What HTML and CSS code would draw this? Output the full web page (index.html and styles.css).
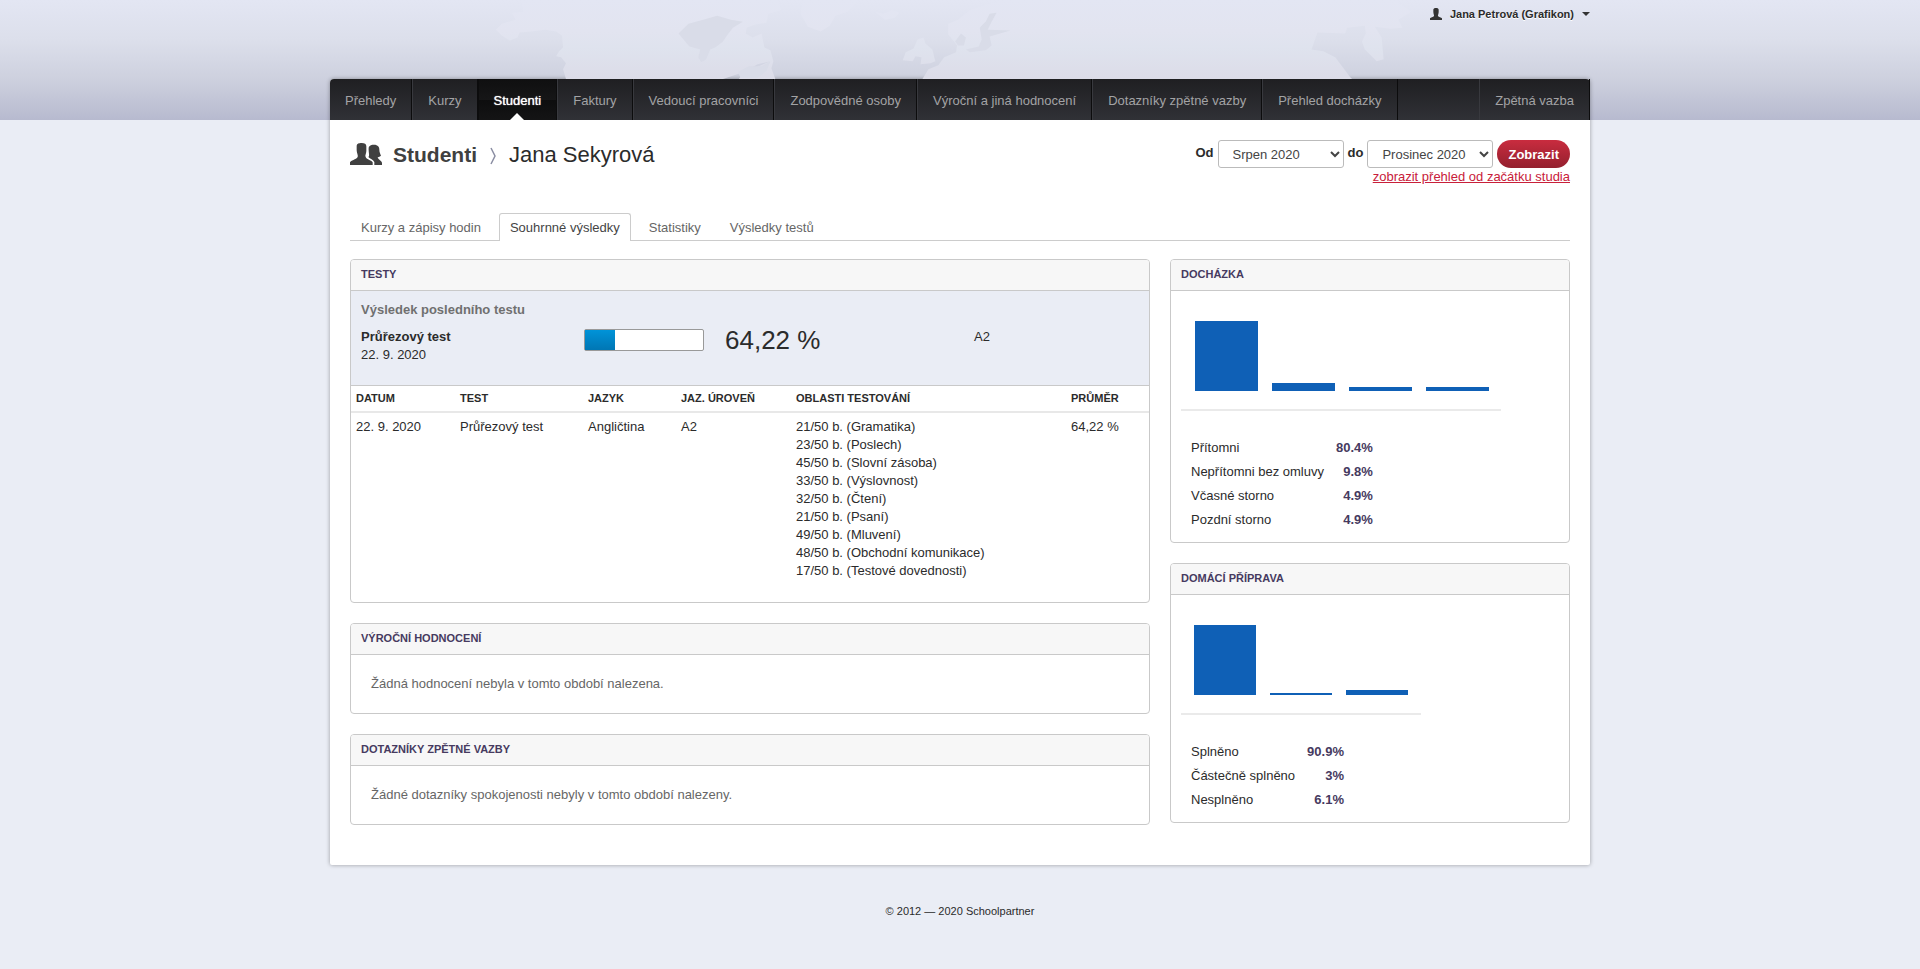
FILE: index.html
```html
<!DOCTYPE html>
<html lang="cs">
<head>
<meta charset="utf-8">
<title>Studenti – Jana Sekyrová</title>
<link rel="stylesheet" href="styles.css">
</head>
<body>
<header class="top">
  <div class="wrap top-inner">
    <svg class="map" viewBox="330 0 1260 80" preserveAspectRatio="xMidYMin meet" aria-hidden="true">
      <defs>
        <linearGradient id="land" x1="0" y1="0" x2="0" y2="80" gradientUnits="userSpaceOnUse">
          <stop offset="0" stop-color="#e3e6f3"/><stop offset="0.4" stop-color="#e2e4f0"/>
          <stop offset="0.6" stop-color="#dfe3ee"/><stop offset="1" stop-color="#dcdce8"/>
        </linearGradient>
      </defs>
      <g fill="url(#land)">
        <path d="M515 0H776L779 10L766 14L764 23L752 25L744 28L743 34L750 38L759 34L762 48L768 51L771 62L769 69L773 80H736L741 74L756 67L768 62L755 65L741 73L735 75L720 80H561L558 70L561 64L556 58L551 57L554 52L558 48L557 36L551 32L540 30L526 32L514 33L512 38L504 41L496 36L490 30L496 24L510 20L506 13L518 12Z"/>
        <path d="M800 0H858L846 12L834 16L828 26L819 32L806 27L799 15Z"/>
        <path d="M874 12L882 14L892 10L899 13L894 18L884 20Z"/>
        <path d="M1020 0H1400L1417 12L1404 20L1408 28L1396 29L1380 27L1387 38L1389 60L1382 62L1370 50L1367 42L1371 34L1370 26L1352 28L1350 34L1322 33L1316 50L1328 52L1340 58L1355 78L1357 80H922L928 70L938 66L944 58L956 53L957 46L954 42L948 35L948 24L958 20L970 10L1002 0Z"/>
        <path d="M917 40L923 38L925 44L932 50L935 62L930 64L920 65L921 58L915 57L912 62L902 61L905 53L913 49Z"/>
      </g>
      <g fill="#d9dce8">
        <path d="M675 34L685 24L700 20L714 16L728 20L740 22L730 28L724 36L720 42L712 48L707 50L703 60L698 63L695 58L697 50L686 47Z"/>
        <path d="M735 73L746 67L759 67L768 62L764 72L755 79H738Z"/>
        <path d="M980 28L986 22L990 14L997 13L992 22L988 30L1011 31L990 37L992 46L986 51L970 53L966 50L979 47L982 40Z"/>
        <path d="M955 42L961 34L966 38L964 46L958 46Z"/>
      </g>
    </svg>
    <button class="user" type="button">
      <svg class="user-icon" viewBox="0 0 36 36" aria-hidden="true"><path d="M0 36V31C2 28 10 27 12 24C13 21 10 18 10 12V5C10 2 13 0 18 0C23 0 26 2 26 5V12C26 18 23 21 24 24C26 27 34 28 36 31V36Z"/></svg>
      <span>Jana Petrová (Grafikon)</span>
      <span class="caret"></span>
    </button>
  </div>
</header>

<div class="wrap page">
  <nav class="nav">
    <a href="#">Přehledy</a>
    <a href="#">Kurzy</a>
    <a href="#" class="active" aria-current="page">Studenti</a>
    <a href="#">Faktury</a>
    <a href="#">Vedoucí pracovníci</a>
    <a href="#">Zodpovědné osoby</a>
    <a href="#">Výroční a jiná hodnocení</a>
    <a href="#">Dotazníky zpětné vazby</a>
    <a href="#">Přehled docházky</a>
    <a href="#" class="nav-end">Zpětná vazba</a>
  </nav>

  <main class="content">
    <div class="title-row">
      <h1 class="title">
        <svg class="title-icon" viewBox="0 0 96 66" aria-hidden="true">
          <path d="M0 66V58C2 52 18 50 23 42C25 38 20 30 20 22V10C20 2 26 0 35 0C44 0 49 2 49 10V24C49 32 44 38 47 42C50 50 66 52 68 58V66Z"/>
          <path d="M56 14C58 6 66 5 72 5C84 5 88 12 88 20C88 28 92 34 93 38C89 42 83 41 83 44C86 50 94 52 96 59V66H73V57C70 50 60 47 55 42C60 38 55 28 56 14Z"/>
        </svg>
        <strong>Studenti</strong>
        <svg class="chevron" viewBox="0 0 6 18" aria-hidden="true"><path d="M1 1L5 9L1 17"/></svg>
        <span>Jana Sekyrová</span>
      </h1>
      <form class="filter">
        <div class="filter-row">
          <label for="from">Od</label>
          <select id="from"><option>Srpen 2020</option></select>
          <label for="to">do</label>
          <select id="to"><option>Prosinec 2020</option></select>
          <button class="submit" type="button">Zobrazit</button>
        </div>
        <a class="all-link" href="#">zobrazit přehled od začátku studia</a>
      </form>
    </div>

    <div class="tabs">
      <a href="#">Kurzy a zápisy hodin</a>
      <a href="#" class="current">Souhrnné výsledky</a>
      <a href="#">Statistiky</a>
      <a href="#">Výsledky testů</a>
    </div>

    <div class="columns">
      <div class="column">
        <section class="panel">
          <h2>TESTY</h2>
          <div class="summary">
            <h3>Výsledek posledního testu</h3>
            <div class="summary-row">
              <div><strong>Průřezový test</strong><br>22. 9. 2020</div>
              <div class="meter"><div class="meter-fill"></div></div>
              <div class="score">64,22 %</div>
              <div>A2</div>
            </div>
          </div>
          <table class="results">
            <thead>
              <tr><th class="c-date">DATUM</th><th class="c-test">TEST</th><th class="c-lang">JAZYK</th><th class="c-level">JAZ. ÚROVEŇ</th><th class="c-areas">OBLASTI TESTOVÁNÍ</th><th>PRŮMĚR</th></tr>
            </thead>
            <tbody>
              <tr>
                <td>22. 9. 2020</td><td>Průřezový test</td><td>Angličtina</td><td>A2</td>
                <td>21/50 b. (Gramatika)<br>23/50 b. (Poslech)<br>45/50 b. (Slovní zásoba)<br>33/50 b. (Výslovnost)<br>32/50 b. (Čtení)<br>21/50 b. (Psaní)<br>49/50 b. (Mluvení)<br>48/50 b. (Obchodní komunikace)<br>17/50 b. (Testové dovednosti)</td>
                <td>64,22 %</td>
              </tr>
            </tbody>
          </table>
        </section>
        <section class="panel">
          <h2>VÝROČNÍ HODNOCENÍ</h2>
          <p class="empty">Žádná hodnocení nebyla v tomto období nalezena.</p>
        </section>
        <section class="panel">
          <h2>DOTAZNÍKY ZPĚTNÉ VAZBY</h2>
          <p class="empty">Žádné dotazníky spokojenosti nebyly v tomto období nalezeny.</p>
        </section>
      </div>

      <div class="column">
        <section class="panel">
          <h2>DOCHÁZKA</h2>
          <div class="chart chart-four">
            <div class="bar" style="height:70px"></div>
            <div class="bar" style="height:8px"></div>
            <div class="bar" style="height:4px"></div>
            <div class="bar" style="height:4px"></div>
          </div>
          <table class="legend">
            <tr><th>Přítomni</th><td>80.4%</td></tr>
            <tr><th>Nepřítomni bez omluvy</th><td>9.8%</td></tr>
            <tr><th>Včasné storno</th><td>4.9%</td></tr>
            <tr><th>Pozdní storno</th><td>4.9%</td></tr>
          </table>
        </section>
        <section class="panel">
          <h2>DOMÁCÍ PŘÍPRAVA</h2>
          <div class="chart chart-three">
            <div class="bar" style="height:70px"></div>
            <div class="bar" style="height:2px"></div>
            <div class="bar" style="height:5px"></div>
          </div>
          <table class="legend">
            <tr><th>Splněno</th><td>90.9%</td></tr>
            <tr><th>Částečně splněno</th><td>3%</td></tr>
            <tr><th>Nesplněno</th><td>6.1%</td></tr>
          </table>
        </section>
      </div>
    </div>
  </main>
</div>
<footer class="footer">© 2012 — 2020 Schoolpartner</footer>
</body>
</html>
```
FILE: styles.css
```css
* { box-sizing: border-box; }

body {
  margin: 0;
  background: #eaedf5 linear-gradient(#e3e6f3, #dcdfeb 40px, #cdd0de 80px, #b7bacf 120px) no-repeat 0 0 / 100% 120px;
  color: #2b2b2b;
  font: 13px/18px "Liberation Sans", Arial, sans-serif;
}

.wrap { max-width: 1260px; margin: 0 auto; }

/* top strip with the world map */
.top-inner {
  position: relative;
  display: flex;
  justify-content: flex-end;
  height: 79px;
}
.map { position: absolute; inset: 0; width: 100%; height: 100%; }
.user {
  position: relative;
  display: flex;
  align-items: center;
  align-self: flex-start;
  gap: 8px;
  padding: 5px 0;
  border: 0;
  background: none;
  color: #2b2b2b;
  font: bold 11px/18px "Liberation Sans", Arial, sans-serif;
  text-shadow: 0 1px 0 #fff;
}
.user-icon { width: 12px; height: 12px; fill: #333; }
.caret { border: 4px solid transparent; border-top-color: #333; border-bottom: 0; }

.page {
  background: #fff;
  border-radius: 4px 4px 2px 2px;
  box-shadow: 0 0 4px rgba(0, 0, 0, .35);
}

/* main navigation */
.nav {
  display: flex;
  height: 41px;
  border-radius: 4px 4px 0 0;
  background: linear-gradient(#1f1f22, #303136);
}
.nav a {
  padding: 0 15px;
  border-right: 1px solid #0c0c0d;
  border-left: 1px solid #38393e;
  color: #a3a3a5;
  line-height: 44px;
  text-decoration: none;
  white-space: nowrap;
}
.nav a:first-child { border-left: 0; }
.nav a.active {
  position: relative;
  background: linear-gradient(#0f0f10, #161617 50%, #0d0d0e 50%, #141415);
  border-left-color: #0c0c0d;
  color: #fff;
  text-shadow: 0 0 1px #fff;
}
.nav a.active::after {
  content: "";
  position: absolute;
  bottom: 0;
  left: 50%;
  margin-left: -7px;
  border: 7px solid transparent;
  border-top: 0;
  border-bottom-color: #fff;
}
.nav a.nav-end { margin-left: auto; }

.content { padding: 20px 20px 40px; }

/* page title and period filter */
.title-row { display: flex; justify-content: space-between; }
.title {
  display: flex;
  align-items: center;
  height: 30px;
  margin: 0;
  color: #2b2b2b;
  font-size: 22px;
  font-weight: normal;
  line-height: 30px;
}
.title strong { color: #404040; font-size: 21px; }
.title-icon { width: 32px; height: 22px; margin: 0 11px 2px 0; fill: #404040; }
.chevron { width: 6px; height: 18px; margin: 2px 13px 0; fill: none; stroke: #8b8ea3; stroke-width: 1.5; }

.filter { display: flex; flex-direction: column; align-items: flex-end; height: 73px; }
.filter-row { display: flex; gap: 4px; }
.filter-row label { font-weight: bold; line-height: 26px; }
.filter-row select {
  width: 126px;
  height: 28px;
  padding: 0 0 0 10px;
  border: 1px solid #bbb;
  border-radius: 3px;
  background: #fff;
  color: #444;
  font: 13px "Liberation Sans", Arial, sans-serif;
}
.submit {
  height: 28px;
  padding: 0 11px;
  border: 0;
  border-radius: 14px;
  background: linear-gradient(#c92c3f, #94202e);
  color: #fff;
  font: bold 13px "Liberation Sans", Arial, sans-serif;
}
.all-link { color: #c8203a; }

/* tabs */
.tabs { display: flex; gap: 7px; border-bottom: 1px solid #ccc; }
.tabs a {
  height: 28px;
  margin-bottom: -1px;
  padding: 0 10px;
  border: 1px solid transparent;
  border-bottom: 0;
  border-radius: 3px 3px 0 0;
  color: #666;
  line-height: 27px;
  text-decoration: none;
}
.tabs a.current { border-color: #ccc; background: #fff; color: #444; }

/* panels */
.columns { display: grid; grid-template-columns: 2fr 1fr; gap: 20px; padding-top: 18px; }
.column { display: flex; flex-direction: column; gap: 20px; }
.panel { border: 1px solid #c9c9c9; border-radius: 4px; overflow: hidden; }
.panel h2 {
  margin: 0;
  padding: 0 10px 2px;
  border-bottom: 1px solid #c9c9c9;
  background: #f7f7f7;
  color: #463a60;
  font-size: 11px;
  line-height: 28px;
}
.empty { margin: 0; padding: 20px; color: #666; }

.summary {
  height: 95px;
  padding: 10px;
  border-bottom: 1px solid #c9c9c9;
  background: #eaedf5;
}
.summary h3 { margin: 0 0 9px; color: #707070; font-size: 13px; }
.summary-row { display: grid; grid-template-columns: 223px 141px 249px 1fr; }
.meter {
  width: 120px;
  height: 22px;
  margin-top: 1px;
  border: 1px solid #999;
  border-radius: 2px;
  background: #fff;
}
.meter-fill { width: 25%; height: 100%; background: linear-gradient(#0093d8, #0076b4); }
.score { font-size: 26px; line-height: 24px; }

.results { width: 100%; border-collapse: collapse; table-layout: fixed; }
.results th, .results td { padding: 3px 5px 4px; text-align: left; vertical-align: top; }
.results th { border-bottom: 2px solid #e8e8e8; font-size: 11px; }
.results td { padding: 5px 5px 22px; }
.c-date { width: 104px; }
.c-test { width: 128px; }
.c-lang { width: 93px; }
.c-level { width: 115px; }
.c-areas { width: 275px; }

/* charts */
.chart {
  display: flex;
  align-items: flex-end;
  gap: 14px;
  height: 120px;
  margin-left: 10px;
  padding: 0 13px 18px;
  border-bottom: 2px solid #eaeaea;
}
.chart-four { width: 320px; padding: 0 12px 18px 14px; }
.chart-three { width: 240px; }
.bar { flex: 1; background: #0f60b6; }
.legend { margin: 25px 0 10px 15px; border-collapse: collapse; }
.legend th, .legend td { padding: 3px 5px; font-weight: normal; text-align: left; }
.legend td { padding-left: 7px; color: #463a60; font-weight: bold; text-align: right; }

.footer { padding: 37px 0 47px; font-size: 11px; text-align: center; }
```
